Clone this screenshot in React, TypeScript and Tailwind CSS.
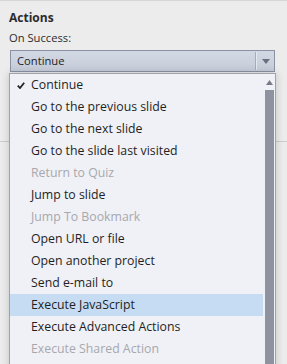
import React from "react";

const items: { label: string; disabled?: boolean; checked?: boolean; active?: boolean }[] = [
  { label: "Continue", checked: true },
  { label: "Go to the previous slide" },
  { label: "Go to the next slide" },
  { label: "Go to the slide last visited" },
  { label: "Return to Quiz", disabled: true },
  { label: "Jump to slide" },
  { label: "Jump To Bookmark", disabled: true },
  { label: "Open URL or file" },
  { label: "Open another project" },
  { label: "Send e-mail to" },
  { label: "Execute JavaScript", active: true },
  { label: "Execute Advanced Actions" },
  { label: "Execute Shared Action", disabled: true },
];

export default function App() {
  return (
    <div
      className="relative w-[287px] h-[364px] overflow-hidden bg-[#ececec] border-t border-[#d6d6d6]"
      style={{ fontFamily: '"Open Sans", sans-serif' }}
    >
      <div className="px-[9px] pt-[9px]">
        <div className="text-[12px] leading-[16px] font-bold text-[#2b2b2b]">Actions</div>
        <div className="mt-[5px] text-[11.2px] leading-[14px] text-[#2b2b2b]">On Success:</div>
        <div className="mt-[5px] ml-px w-[265px] h-[22px] border border-[#8b93a3] bg-gradient-to-b from-[#d2d8e3] to-[#c6cdd9] flex items-center">
          <span className="flex-1 pl-[6px] text-[11.2px] text-[#222]">Continue</span>
          <div className="w-px h-[18px] bg-[#a6adba]" />
          <div className="w-px h-[18px] bg-[#e4e8ef]" />
          <div className="w-[17px] flex justify-center">
            <svg width="8" height="5" viewBox="0 0 8 5">
              <path d="M0 0 H8 L4 5 Z" fill="#6a707e" />
            </svg>
          </div>
        </div>
        <div className="mt-[69px] -mx-[9px] h-px bg-[#cdcdcd]" />
      </div>

      <div className="absolute left-[9px] top-[72px] w-[267px] h-[320px] bg-[#f0f1f6] border border-[#9fa2b1] shadow-[0_0_8px_rgba(0,0,0,0.18)] flex">
        <div className="flex-1">
          {items.map((it) => (
            <div
              key={it.label}
              className={`relative h-[22px] flex items-center pl-[21px] text-[12.3px] ${
                it.active ? "bg-[#c5dcf3]" : ""
              } ${it.disabled ? "text-[#a7a8ad]" : "text-[#1f1f1f]"}`}
            >
              {it.checked && (
                <svg className="absolute left-[7px] top-[8px]" width="8" height="7" viewBox="0 0 8 7">
                  <path d="M0.8 3.6 L3 6 L7.2 0.8" fill="none" stroke="#222" strokeWidth="1.8" />
                </svg>
              )}
              {it.label}
            </div>
          ))}
        </div>
        <div className="w-[12px] flex flex-col items-start pl-[2px]">
          <div className="h-[16px] flex items-center pl-px">
            <svg width="7" height="5" viewBox="0 0 7 5">
              <path d="M3.5 0 L7 5 H0 Z" fill="#777b88" />
            </svg>
          </div>
          <div className="w-[9px] flex-1 bg-[#8f929f]" />
        </div>
      </div>
    </div>
  );
}
